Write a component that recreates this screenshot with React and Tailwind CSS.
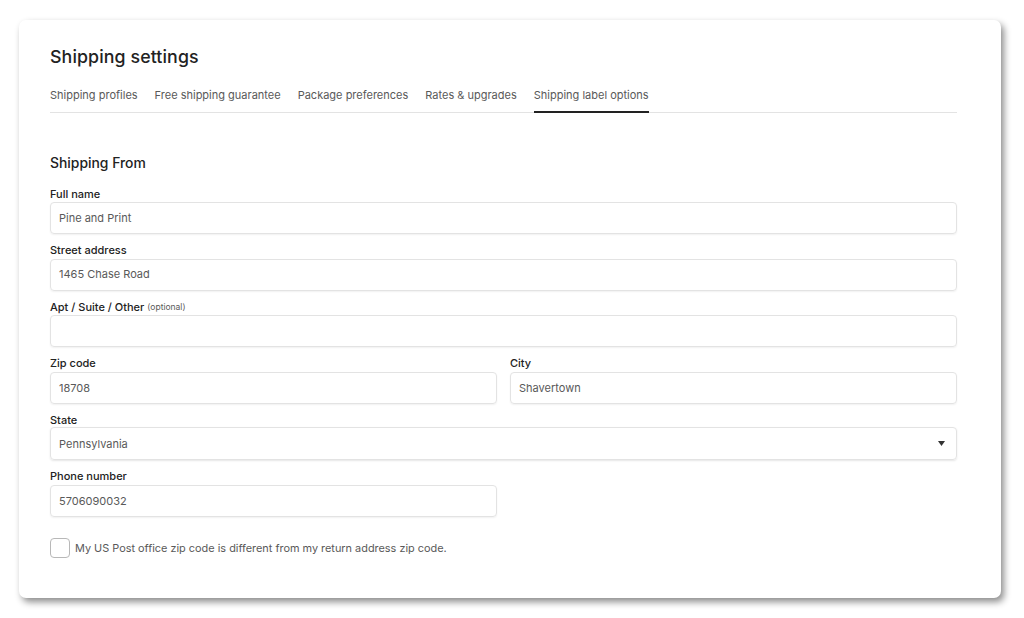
import React from "react";

const font = { fontFamily: "Inter, 'Noto Sans', sans-serif" };

function Field({ label, optional, value, className = "" }) {
  return (
    <div className={"flex flex-col " + className}>
      <div className="h-[14px] flex items-center text-[11px] font-medium text-[#222222] leading-none">
        {label}
        {optional && <span className="ml-[3px] text-[8.5px] font-normal text-[#595959]">(optional)</span>}
      </div>
      <div className="mt-[1px] h-[32px] rounded-[4px] border border-[#e3e3e3] shadow-[0_1px_2px_rgba(0,0,0,0.06)] flex items-center px-[8px] text-[11px] text-[#595959]">
        {value}
      </div>
    </div>
  );
}

export default function App() {
  const tabs = ["Shipping profiles", "Free shipping guarantee", "Package preferences", "Rates & upgrades", "Shipping label options"];
  return (
    <div className="w-[1024px] h-[618px] bg-white overflow-hidden pt-[20px] pl-[19px]" style={font}>
      <div className="w-[982px] h-[578px] bg-white rounded-[7px] shadow-[3px_4px_7px_rgba(0,0,0,0.45)] pl-[31px] pr-[44px] pt-[25px]">
        <h1 className="text-[17.8px] leading-[24px] font-medium text-[#222222] tracking-[0.1px]">Shipping settings</h1>
        <div className="mt-[14px] flex gap-[17px] border-b border-[#e3e3e3] text-[11px] text-[#595959]">
          {tabs.map((t, i) => (
            <div key={t} className={"pb-[9px] pt-[5px] leading-[14px] " + (i === 4 ? "border-b-2 border-[#222222] -mb-px" : "")}>{t}</div>
          ))}
        </div>
        <h2 className="mt-[42px] text-[13.9px] leading-[16px] font-medium text-[#222222]">Shipping From</h2>
        <div className="mt-[16px] flex flex-col gap-[9.6px]">
          <Field label="Full name" value="Pine and Print" />
          <Field label="Street address" value="1465 Chase Road" />
          <Field label="Apt / Suite / Other" optional value="" />
          <div className="flex gap-[13px]">
            <Field label="Zip code" value="18708" className="flex-1" />
            <Field label="City" value="Shavertown" className="flex-1" />
          </div>
          <div className="flex flex-col">
            <div className="h-[14px] flex items-center text-[11px] font-medium text-[#222222] leading-none">State</div>
            <div className="mt-[0px] h-[33px] rounded-[4px] border border-[#e3e3e3] shadow-[0_1px_2px_rgba(0,0,0,0.1)] flex items-center justify-between pl-[8px] pr-[11px] text-[11px] text-[#595959]">
              <span>Pennsylvania</span>
              <svg width="7" height="5" viewBox="0 0 7 5"><path d="M0 0h7L3.5 5z" fill="#333" /></svg>
            </div>
          </div>
          <Field label="Phone number" value="5706090032" className="w-[447px]" />
        </div>
        <div className="mt-[21px] flex items-center gap-[5px]">
          <div className="w-[20px] h-[20px] rounded-[4px] border border-[#b8b8b8]" />
          <span className="text-[10.9px] text-[#595959]">My US Post office zip code is different from my return address zip code.</span>
        </div>
      </div>
    </div>
  );
}
